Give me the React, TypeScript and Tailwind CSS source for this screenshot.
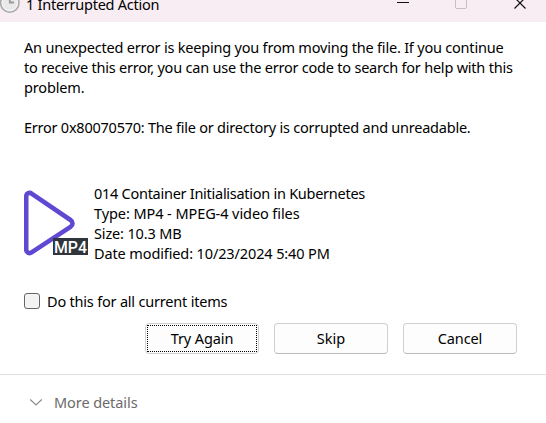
import React from "react";

function ClockIcon() {
  return (
    <svg className="h-[14px] w-[22px] shrink-0" viewBox="0 0 22 14">
      <circle cx="9.800" cy="3" r="9.200" fill="#e9e9e9" stroke="#ababab" strokeWidth="1.600" />
      <circle cx="9.800" cy="3" r="7.600" fill="none" stroke="#f8f8f8" strokeWidth="1" />
      <path d="M9.800 -3V2.500H14" fill="none" stroke="#999" strokeWidth="1.800" />
    </svg>
  );
}

function TitleBar() {
  return (
    <header className="flex h-[22px] items-start bg-[#f8edf2]">
      <ClockIcon />
      <h1 className="-mt-[6px] ml-[4px] flex-1 leading-5 tracking-[-0.25px]">1 Interrupted Action</h1>
      <svg className="h-[22px] w-[166px] shrink-0" viewBox="380 0 166 22" fill="none">
        <path d="M397 2.500H409" stroke="#111" />
        <path d="M455.500 -2V7.200Q455.500 8.500 456.800 8.500H465.200Q466.500 8.500 466.500 7.200V-2" stroke="#c6bec2" />
        <path d="M514.500 -2.500L525.500 8.500M525.500 -2.500L514.500 8.500" stroke="#111" strokeWidth="1.200" />
      </svg>
    </header>
  );
}

function VideoIcon() {
  return (
    <svg className="h-[68px] w-[66px] shrink-0" viewBox="24 189 66 68">
      <path
        d="M26.200 196.500V249.500C26.200 253 29.500 254 32 252.200L70.500 226.800C73.200 225 73.200 221.800 70.500 220L32 193.800C29.500 192 26.200 193 26.200 196.500Z"
        fill="none"
        stroke="#6148d2"
        strokeWidth="4.600"
      />
      <rect x="53" y="238" width="35" height="17" fill="#2f353a" />
      <text x="54" y="252.500" textLength="33" lengthAdjust="spacingAndGlyphs" fill="#fff" fontSize="16" fontWeight="500" fontFamily="Roboto, sans-serif">MP4</text>
    </svg>
  );
}

export default function App() {
  return (
    <main className="flex h-[423px] w-[546px] flex-col overflow-hidden bg-white font-['Noto_Sans',sans-serif] text-[14.5px] leading-5 whitespace-nowrap text-black">
      <TitleBar />
      <section className="mt-[15px] ml-6 h-[101px]">
        <p className="tracking-[-0.205px]">An unexpected error is keeping you from moving the file. If you continue</p>
        <p className="tracking-[-0.218px]">to receive this error, you can use the error code to search for help with this</p>
        <p className="tracking-[-0.15px]">problem.</p>
        <p className="mt-5 tracking-[-0.235px]">Error 0x80070570: The file or directory is corrupted and unreadable.</p>
      </section>
      <section className="mt-[45px] ml-6 flex h-20 items-start gap-1">
        <div className="pt-[6px]"><VideoIcon /></div>
        <div>
          <p className="tracking-[-0.27px]">014 Container Initialisation in Kubernetes</p>
          <p className="tracking-[-0.08px]">Type: MP4 - MPEG-4 video files</p>
          <p className="tracking-[-0.15px]">Size: 10.3 MB</p>
          <p className="tracking-[-0.12px]">Date modified: 10/23/2024 5:40 PM</p>
        </div>
      </section>
      <label className="mt-[28px] ml-6 flex h-5 items-center">
        <span className="h-4 w-4 rounded-[3px] border border-[#666] bg-[#f3f3f3]" />
        <span className="ml-[7px] tracking-[-0.2px]">Do this for all current items</span>
      </label>
      <div className="mt-[12px] mr-[29px] flex justify-end gap-[15px]">
        <button className="h-[31px] w-[114px] rounded-[4px] border border-[#d0d0d0] bg-[#fdfdfd] p-px"><span className="flex h-full items-center justify-center border border-dotted border-black pb-[2px] tracking-[-0.1px]">Try Again</span></button>
        <button className="h-[31px] w-[114px] rounded-[4px] border border-[#d0d0d0] border-b-[#bbb] bg-[#fdfdfd] pb-[2px]">Skip</button>
        <button className="h-[31px] w-[114px] rounded-[4px] border border-[#d0d0d0] border-b-[#bbb] bg-[#fdfdfd] pb-[2px] tracking-[-0.1px]">Cancel</button>
      </div>
      <footer className="mt-5 flex items-start border-t border-[#dfdfdf] pt-[17px] text-[#6b6b6b]">
        <svg className="mt-[6px] ml-[29px] h-[10px] w-[14px]" viewBox="0 0 14 10" fill="none" stroke="#8a8a8a" strokeWidth="1.100"><path d="M1.200 1.500L7 7L12.800 1.500" /></svg>
        <span className="ml-[11px] tracking-[-0.08px]">More details</span>
      </footer>
    </main>
  );
}
